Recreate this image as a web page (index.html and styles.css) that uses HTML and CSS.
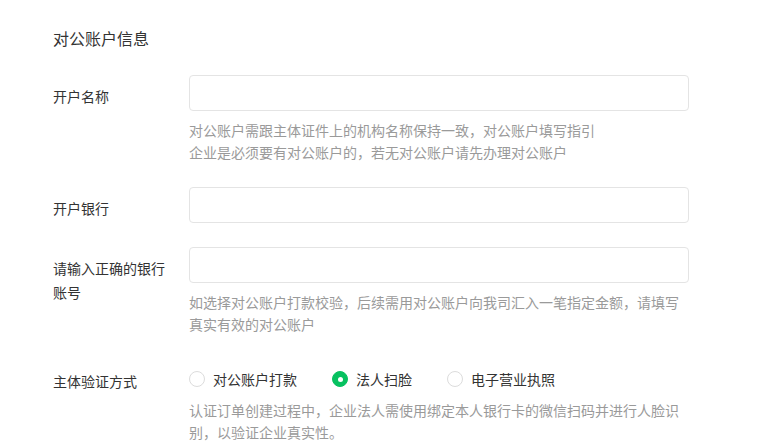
FILE: index.html
```html
<!DOCTYPE html>
<html lang="zh-CN">
<head>
  <meta charset="UTF-8">
  <meta name="viewport" content="width=device-width, initial-scale=1.0">
  <title>对公账户信息</title>
  <link rel="stylesheet" href="styles.css">
</head>
<body>

<div class="section">
  <h2 class="title">对公账户信息</h2>

  <div class="form-row">
    <div class="label">开户名称</div>
    <div class="field">
      <input class="input" type="text">
      <div class="hint">
        对公账户需跟主体证件上的机构名称保持一致，对公账户填写指引<br>
        企业是必须要有对公账户的，若无对公账户请先办理对公账户
      </div>
    </div>
  </div>

  <div class="form-row">
    <div class="label">开户银行</div>
    <div class="field">
      <input class="input" type="text">
    </div>
  </div>

  <div class="form-row">
    <div class="label">请输入正确的银行账号</div>
    <div class="field">
      <input class="input" type="text">
      <div class="hint">如选择对公账户打款校验，后续需用对公账户向我司汇入一笔指定金额，请填写真实有效的对公账户</div>
    </div>
  </div>

  <div class="form-row radio-row">
    <div class="label">主体验证方式</div>
    <div class="field">
      <div class="radio-group">
        <label class="radio"><span class="dot"></span>对公账户打款</label>
        <label class="radio checked"><span class="dot"></span>法人扫脸</label>
        <label class="radio"><span class="dot"></span>电子营业执照</label>
      </div>
      <div class="hint hint-tight">认证订单创建过程中，企业法人需使用绑定本人银行卡的微信扫码并进行人脸识别，以验证企业真实性。</div>
    </div>
  </div>
</div>

</body>
</html>
```

FILE: styles.css
```css
body {
  margin: 0;
  background: #fff;
  color: #333;
  font-family: "Noto Sans CJK SC", "Microsoft YaHei", sans-serif;
  font-size: 14px;
}

.section {
  padding: 26px 0 0 53px;
}

.title {
  margin: 0 0 25px;
  font-size: 16px;
  font-weight: normal;
  line-height: 24px;
}

.form-row {
  display: flex;
  margin-bottom: 24px;
}

.form-row:last-child {
  margin-bottom: 0;
}

.label {
  width: 120px;
  margin-right: 16px;
  padding-top: 9px;
  line-height: 24px;
}

.field {
  width: 500px;
}

.input {
  display: block;
  box-sizing: border-box;
  width: 100%;
  height: 36px;
  margin: 0;
  padding: 0 12px;
  border: 1px solid #e4e4e4;
  border-radius: 4px;
  background: #fff;
  font: inherit;
  outline: none;
}

.hint {
  margin-top: 8px;
  color: #9a9a9a;
  line-height: 22px;
}

.hint-tight {
  margin-top: 2px;
}

/* 单选 */
.radio-row {
  padding-top: 2px;
}

.radio-row .label {
  padding-top: 8px;
}

.radio-group {
  display: flex;
  align-items: center;
  gap: 35px;
  height: 36px;
}

.radio {
  display: flex;
  align-items: center;
  gap: 8px;
  line-height: 24px;
  cursor: pointer;
}

.dot {
  box-sizing: border-box;
  width: 16px;
  height: 16px;
  border: 1px solid #dcdcdc;
  border-radius: 50%;
  background: #fff;
  position: relative;
}

.radio.checked .dot {
  border-color: #07c160;
  background: #07c160;
}

.radio.checked .dot::after {
  content: "";
  position: absolute;
  top: 50%;
  left: 50%;
  width: 5px;
  height: 5px;
  margin: -2.5px 0 0 -2.5px;
  border-radius: 50%;
  background: #fff;
}
```
